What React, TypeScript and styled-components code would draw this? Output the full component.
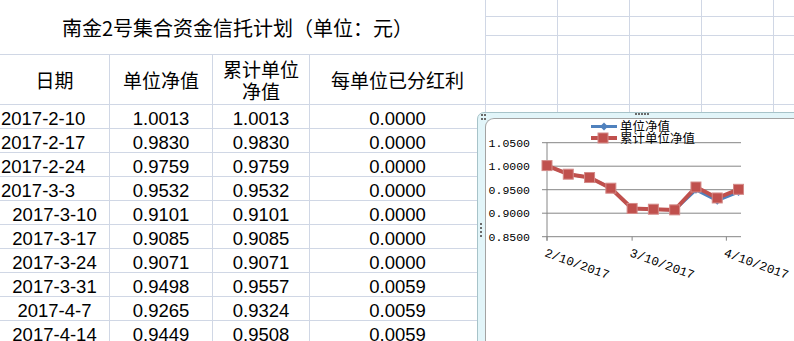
import React from "react";
import styled, { createGlobalStyle } from "styled-components";

const GRID = "#d0d7e5";

const GlobalStyle = createGlobalStyle`
  html, body { margin: 0; padding: 0; background: #fff; }
  body { overflow: hidden; }
`;

const Sheet = styled.div`
  position: relative;
  width: 794px;
  height: 341px;
  overflow: hidden;
  background: #fff;
  color: #000;
  font-family: "Liberation Sans", "Noto Sans CJK SC", sans-serif;
`;

const Grid = styled.div`
  display: grid;
  grid-template-columns: 110px 103px 97px 176px 72px 72px 72px 72px 72px;
  grid-template-rows: 17px 19px 19px 50px repeat(11, 24px);
`;

const Cell = styled.div<{ $align?: "left" | "center" }>`
  box-sizing: border-box;
  border-right: 1px solid ${GRID};
  border-bottom: 1px solid ${GRID};
  padding: 3px 0 0 ${(p) => (p.$align === "left" ? "1px" : "0")};
  font-size: 18.5px;
  line-height: 21px;
  white-space: nowrap;
  text-align: ${(p) => p.$align || "center"};
`;

const TitleCell = styled.div`
  grid-column: 1 / 5;
  grid-row: 1 / 4;
  box-sizing: border-box;
  border-right: 1px solid ${GRID};
  border-bottom: 1px solid ${GRID};
  display: flex;
  align-items: center;
  justify-content: center;
  padding-right: 10px;
  font-family: "Noto Sans CJK SC", sans-serif;
  font-size: 20px;
`;

const HeadCell = styled.div`
  box-sizing: border-box;
  border-right: 1px solid ${GRID};
  border-bottom: 1px solid ${GRID};
  display: flex;
  align-items: center;
  justify-content: center;
  text-align: center;
  padding: 0 8px;
  font-family: "Noto Sans CJK SC", sans-serif;
  font-size: 19px;
  line-height: 22px;
`;

const ChartFrame = styled.div`
  position: absolute;
  left: 477px;
  top: 112px;
  width: 340px;
  height: 250px;
  box-sizing: border-box;
  padding: 5px 0 0 7px;
  background: #e2f5f9;
  border: 1px solid #a7c3c9;
  border-top-left-radius: 7px;
`;

const ChartPanel = styled.div`
  position: relative;
  height: 100%;
  background: #fff;
  border-left: 1px solid #a3a3a3;
  border-top: 1px solid #a3a3a3;
  border-top-left-radius: 9px;
`;

const Grip = styled.span<{ $x: number; $y: number; $w: number; $h: number }>`
  position: absolute;
  left: ${(p) => p.$x}px;
  top: ${(p) => p.$y}px;
  width: ${(p) => p.$w}px;
  height: ${(p) => p.$h}px;
  background-image: radial-gradient(circle at 1px 1px, #6a6a6a 0.9px, transparent 1.1px);
  background-size: 3px 4px;
`;

const Plot = styled.svg`
  position: absolute;
  left: 0;
  top: 0;
  overflow: visible;
`;

const rows = [
  ["2017-2-10", "1.0013", "1.0013", "0.0000", "left"],
  ["2017-2-17", "0.9830", "0.9830", "0.0000", "left"],
  ["2017-2-24", "0.9759", "0.9759", "0.0000", "left"],
  ["2017-3-3", "0.9532", "0.9532", "0.0000", "left"],
  ["2017-3-10", "0.9101", "0.9101", "0.0000", "center"],
  ["2017-3-17", "0.9085", "0.9085", "0.0000", "center"],
  ["2017-3-24", "0.9071", "0.9071", "0.0000", "center"],
  ["2017-3-31", "0.9498", "0.9557", "0.0059", "center"],
  ["2017-4-7", "0.9265", "0.9324", "0.0059", "center"],
  ["2017-4-14", "0.9449", "0.9508", "0.0059", "center"],
];

const days = [0, 7, 14, 21, 28, 35, 42, 49, 56, 63];
const unit = rows.map((r) => parseFloat(r[1]));
const cum = rows.map((r) => parseFloat(r[2]));

// chart panel origin sits at page (486, 119)
const px = (d: number) => 61 + d * 3.04;
const py = (v: number) => 23.7 + (1.05 - v) * 470;

const Blanks = ({ n }: { n: number }) => (
  <>
    {Array.from({ length: n }).map((_, i) => (
      <Cell key={i} />
    ))}
  </>
);

const Chart = () => {
  const line = (vals: number[]) =>
    vals.map((v, i) => `${px(days[i]).toFixed(1)},${py(v).toFixed(1)}`).join(" ");
  const ticks = [
    { d: 0, label: "2/10/2017" },
    { d: 28, label: "3/10/2017" },
    { d: 59, label: "4/10/2017" },
  ];
  return (
    <Plot width={320} height={230}>
      {[1.05, 1.0, 0.95, 0.9].map((v) => (
        <line key={v} x1={56} x2={255} y1={py(v)} y2={py(v)} stroke="#868686" strokeWidth={1} />
      ))}
      <line x1={56} x2={255} y1={py(0.85)} y2={py(0.85)} stroke="#868686" strokeWidth={1} />
      <line x1={61} x2={61} y1={py(1.05)} y2={py(0.85) + 4} stroke="#868686" strokeWidth={1} />
      {ticks.map((t) => (
        <line key={t.d} x1={px(t.d)} x2={px(t.d)} y1={py(0.85)} y2={py(0.85) + 4} stroke="#868686" />
      ))}
      {["1.0500", "1.0000", "0.9500", "0.9000", "0.8500"].map((s) => (
        <text
          key={s}
          x={44}
          y={py(parseFloat(s))}
          dy="0.36em"
          textAnchor="end"
          fontFamily='"Liberation Mono", monospace'
          fontSize={11.5}
          fill="#000"
        >
          {s}
        </text>
      ))}
      {ticks.map((t) => {
        const x = px(t.d) - 3;
        const y = 137;
        return (
          <text
            key={t.label}
            x={x}
            y={y}
            transform={`rotate(20 ${x} ${y})`}
            fontFamily='"Liberation Mono", monospace'
            fontSize={12.5}
            fill="#000"
          >
            {t.label}
          </text>
        );
      })}

      <polyline points={line(unit)} fill="none" stroke="#4f81bd" strokeWidth={3} strokeLinejoin="round" />
      {unit.map((v, i) => {
        const x = px(days[i]);
        const y = py(v);
        return <polygon key={i} points={`${x},${y - 4} ${x + 4},${y} ${x},${y + 4} ${x - 4},${y}`} fill="#4f81bd" />;
      })}
      <polyline points={line(cum)} fill="none" stroke="#c0504d" strokeWidth={4} strokeLinejoin="round" />
      {cum.map((v, i) => (
        <rect
          key={i}
          x={px(days[i]) - 5}
          y={py(v) - 5}
          width={10}
          height={10}
          fill="#c0504d"
          stroke="#d48a88"
          strokeWidth={1}
        />
      ))}

      <line x1={105} x2={131} y1={7.5} y2={7.5} stroke="#4f81bd" strokeWidth={3} />
      <polygon points="118,3.5 122,7.5 118,11.5 114,7.5" fill="#4f81bd" />
      <text x={134} y={7.8} dy="0.36em" fontFamily='"Noto Sans CJK SC", sans-serif' fontSize={12.5} fill="#000">
        单位净值
      </text>
      <line x1={105} x2={131} y1={19} y2={19} stroke="#c0504d" strokeWidth={4} />
      <rect x={112} y={14} width={10} height={10} fill="#c0504d" stroke="#d48a88" strokeWidth={1} />
      <text x={134} y={19} dy="0.36em" fontFamily='"Noto Sans CJK SC", sans-serif' fontSize={12.5} fill="#000">
        累计单位净值
      </text>
    </Plot>
  );
};

const App = () => {
  return (
    <Sheet>
      <GlobalStyle />
      <Grid>
        <TitleCell>南金2号集合资金信托计划（单位：元）</TitleCell>
        <Blanks n={5} />
        <Blanks n={5} />
        <Blanks n={5} />

        <HeadCell>日期</HeadCell>
        <HeadCell>单位净值</HeadCell>
        <HeadCell>累计单位净值</HeadCell>
        <HeadCell>每单位已分红利</HeadCell>
        <Blanks n={5} />

        {rows.map((r) => (
          <React.Fragment key={r[0]}>
            <Cell $align={r[4] as "left" | "center"}>{r[0]}</Cell>
            <Cell>{r[1]}</Cell>
            <Cell>{r[2]}</Cell>
            <Cell>{r[3]}</Cell>
            <Blanks n={5} />
          </React.Fragment>
        ))}
      </Grid>

      <ChartFrame>
        <Grip $x={3} $y={1} $w={6} $h={6} />
        <Grip $x={157} $y={0} $w={14} $h={3} />
        <Grip $x={2} $y={110} $w={3} $h={15} />
        <ChartPanel>
          <Chart />
        </ChartPanel>
      </ChartFrame>
    </Sheet>
  );
};

export default App;
